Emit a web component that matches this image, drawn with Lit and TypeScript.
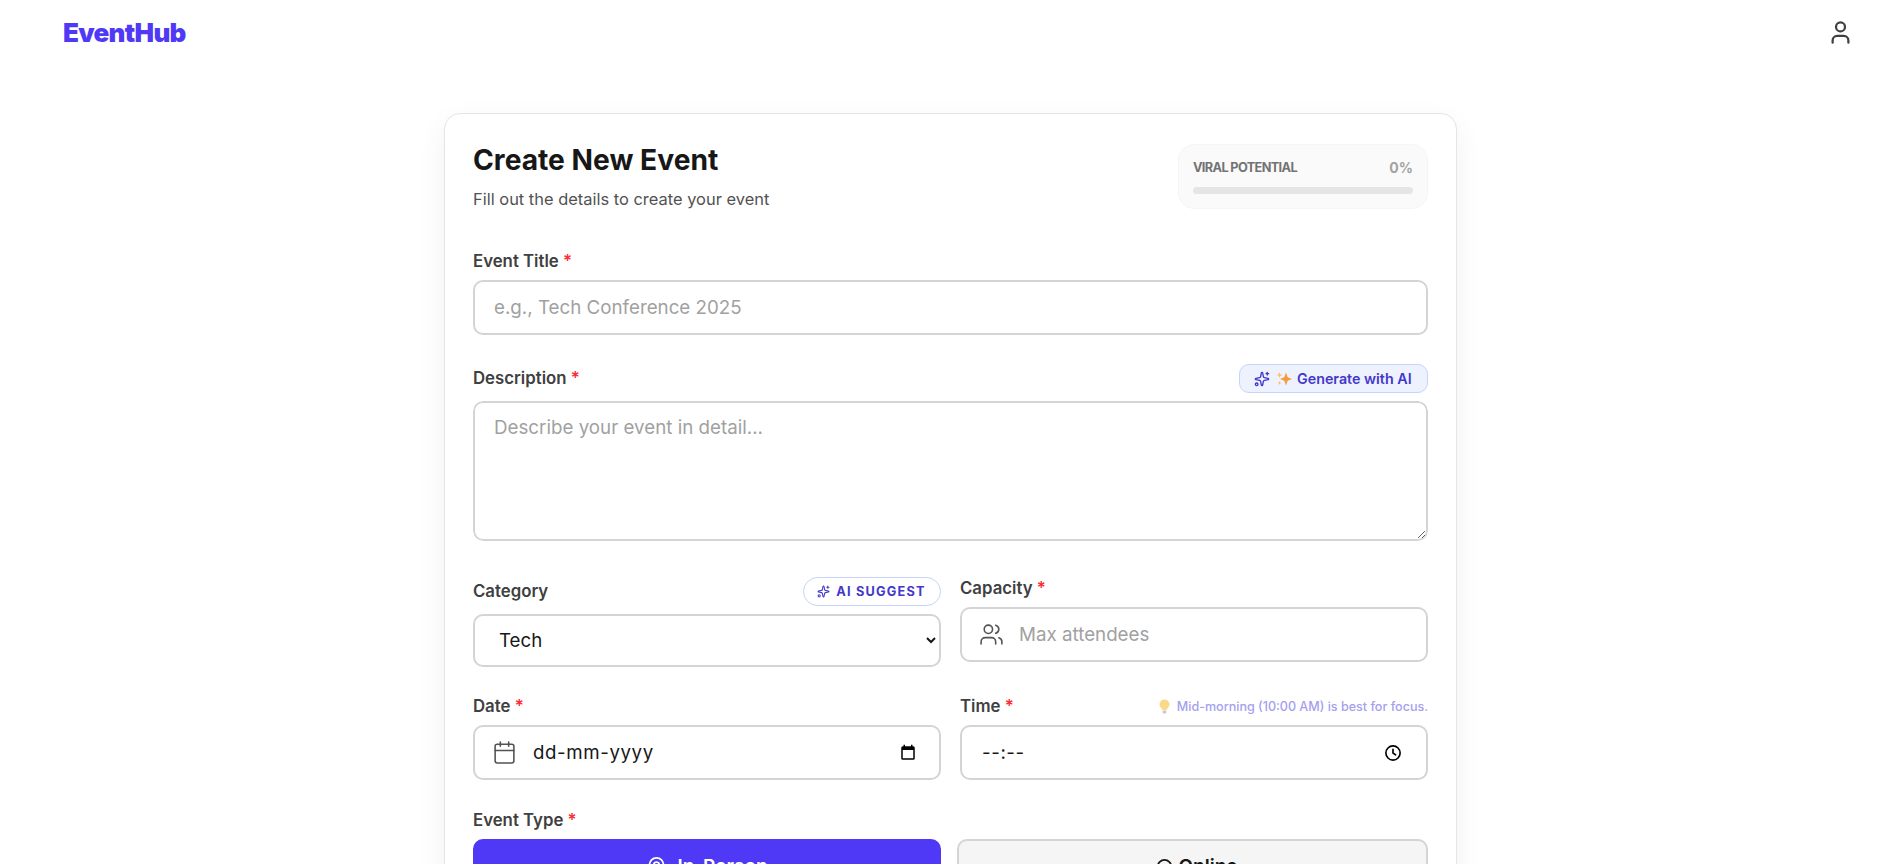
import { LitElement, html, css, svg } from "lit";
import { customElement } from "lit/decorators.js";

const ic = (cls: string, body: unknown) => html`<svg class=${cls} viewBox="0 0 24 24" fill="none" stroke="currentColor" stroke-width="2" stroke-linecap="round" stroke-linejoin="round">${body}</svg>`;

const sparkles = svg`<path d="M11.017 2.814a1 1 0 0 1 1.966 0l1.051 5.558a2 2 0 0 0 1.594 1.594l5.558 1.051a1 1 0 0 1 0 1.966l-5.558 1.051a2 2 0 0 0-1.594 1.594l-1.051 5.558a1 1 0 0 1-1.966 0l-1.051-5.558a2 2 0 0 0-1.594-1.594l-5.558-1.051a1 1 0 0 1 0-1.966l5.558-1.051a2 2 0 0 0 1.594-1.594z"/><path d="M20 2v4"/><path d="M22 4h-4"/><circle cx="4" cy="20" r="2"/>`;
const user = svg`<path d="M19 21v-2a4 4 0 0 0-4-4H9a4 4 0 0 0-4 4v2"/><circle cx="12" cy="7" r="4"/>`;
const users = svg`<path d="M16 21v-2a4 4 0 0 0-4-4H6a4 4 0 0 0-4 4v2"/><circle cx="9" cy="7" r="4"/><path d="M22 21v-2a4 4 0 0 0-3-3.87"/><path d="M16 3.13a4 4 0 0 1 0 7.75"/>`;
const calendar = svg`<path d="M8 2v4"/><path d="M16 2v4"/><rect x="3" y="4" width="18" height="18" rx="2"/><path d="M3 10h18"/>`;
const pin = svg`<path d="M20 10c0 4.993-5.539 10.193-7.399 11.799a1 1 0 0 1-1.202 0C9.539 20.193 4 14.993 4 10a8 8 0 0 1 16 0"/><circle cx="12" cy="10" r="3"/>`;

@customElement("app-root")
export class AppRoot extends LitElement {
  static styles = css`
    :host { display: block; height: 864px; overflow: hidden; background: #fff; color: #262626;
      font-family: Inter, "Liberation Sans", sans-serif; }
    * { box-sizing: border-box; }
    .nav { height: 64px; display: flex; align-items: center; justify-content: space-between; padding: 0 43px 0 63px; }
    .logo { font-family: Inter, sans-serif; font-weight: 900; font-size: 26px; letter-spacing: -0.7px; color: #4f39f6; }
    .ic-user { width: 27px; height: 27px; color: #404040; display: block; }
    .main { padding: 49px 0 0 444px; }
    .card { width: 1013px; height: 900px; border: 1px solid #e5e5e5; border-radius: 16px; padding: 28px;
      background: #fff; box-shadow: 0 10px 30px rgba(0,0,0,.06); }
    .head { display: flex; justify-content: space-between; align-items: flex-start; margin-bottom: 38px; }
    h1 { margin: 0 0 9px; font-size: 28.2px; line-height: 36px; font-weight: 700; color: #171717; }
    .sub { margin: 0; font-size: 16.45px; line-height: 24px; color: #525252; }
    .viral { width: 250px; height: 65px; margin-top: 2px; padding: 12px 14px; border-radius: 16px; background: #fafafa; border: 1px solid #f5f5f5; }
    .viral-top { display: flex; justify-content: space-between; align-items: center; height: 20px; margin-bottom: 10px; }
    .viral-lab { font-size: 12.75px; font-weight: 700; color: #737373; letter-spacing: -0.65px; }
    .viral-val { font-size: 14px; font-weight: 700; color: #a3a3a3; }
    .track { height: 7px; border-radius: 4px; background: #e5e5e5; }
    .lab { font-size: 16.8px; line-height: 25px; font-weight: 600; color: #404040; display: block; }
    .lab i { font-style: normal; color: #fb2c36; }
    .field-title { margin-bottom: 29px; }
    .field-desc { margin-bottom: 35px; }
    .lab-row { display: flex; justify-content: space-between; align-items: center; height: 29px; }
    .box { display: flex; align-items: center; width: 100%; border: 2px solid #d4d4d4; border-radius: 10px; background: #fff;
      padding: 0 19px; font: 18.75px Inter, sans-serif; color: #171717; }
    .box input, .box textarea { border: 0; outline: 0; padding: 0; flex: 1; min-width: 0; font: inherit; color: inherit; background: transparent; }
    .box input::placeholder, .box textarea::placeholder { color: #a1a1a1; opacity: 1; }
    .single { height: 55px; margin-top: 6px; }
    .with-icon { padding-left: 17px; }
    .ta { margin-top: 8px; height: 140px; padding: 0; overflow: hidden; border: 0; }
    .ta textarea { display: block; width: 100%; height: 100%; border: 2px solid #d4d4d4; border-radius: 10px; padding: 11px 19px; line-height: 28px; resize: vertical; }
    .gen { display: flex; align-items: center; gap: 6px; height: 29px; width: 189px; padding: 0 14px; border: 1px solid #c7d2fe; border-radius: 10px;
      background: #eef2ff; color: #4338ca; font: 600 14.3px Inter, sans-serif; white-space: nowrap; }
    .gen-text { margin-left: -1px; }
    .s16 { width: 16px; height: 16px; flex: none; }
    .s12 { width: 13px; height: 13px; flex: none; }
    .bulb { width: 15px; height: 15px; flex: none; }
    .grid { display: grid; grid-template-columns: 467.5px 468px; column-gap: 19.5px; }
    .col-cat { padding-top: 1px; }
    .pill { display: flex; align-items: center; justify-content: center; gap: 6px; width: 138px; height: 29px; border: 1px solid #c7d2fe; border-radius: 15px; background: #fff;
      color: #4338ca; font: 700 12.75px Inter, sans-serif; letter-spacing: 1.2px; }
    select { display: block; width: 100%; height: 53px; margin-top: 8px; padding: 0 20px; border: 2px solid #d4d4d4; border-radius: 10px; background: #fff;
      font: 18.7px Inter, sans-serif; color: #171717; outline: 0; }
    .ic-field { width: 25px; height: 25px; flex: none; color: #525252; margin-right: 15px; stroke-width: 1.5; }
    .dt { font-size: 18.7px; letter-spacing: 0.6px; flex: 1; padding-left: 1px; }
    .native { width: 18px; height: 18px; flex: none; color: #000; }
    .cal { margin-right: 3px; }
    .clock { margin-right: 5px; }
    .row2 { margin-top: 27px; }
    .lab-tip { display: flex; justify-content: space-between; align-items: center; }
    .tip { display: flex; align-items: center; gap: 5px; font-size: 12.55px; font-weight: 500; color: #a5a0ee; }
    .et { margin-top: 28px; }
    .types { display: grid; grid-template-columns: 468px 471px; column-gap: 16px; margin-top: 6px; }
    .type { height: 55px; border-radius: 10px; display: flex; align-items: center; justify-content: center; gap: 10px; font: 600 19px Inter, sans-serif; }
    .on { background: #4f39f6; color: #fff; border: 2px solid #4f39f6; }
    .off { background: #f5f5f5; color: #171717; border: 2px solid #d4d4d4; gap: 4px; }
    .ic-type { width: 21px; height: 21px; }
    .ic-online { width: 27px; height: 21px; flex: none; }
  `;

  render() {
    return html`
      <div class="nav">
        <div class="logo">EventHub</div>
        ${ic("ic-user", user)}
      </div>
      <div class="main">
        <div class="card">
          <div class="head">
            <div>
              <h1>Create New Event</h1>
              <p class="sub">Fill out the details to create your event</p>
            </div>
            <div class="viral">
              <div class="viral-top"><span class="viral-lab">VIRAL POTENTIAL</span><span class="viral-val">0%</span></div>
              <div class="track"></div>
            </div>
          </div>

          <div class="field-title">
            <label class="lab">Event Title <i>*</i></label>
            <div class="box single"><input placeholder="e.g., Tech Conference 2025" /></div>
          </div>

          <div class="field-desc">
            <div class="lab-row">
              <label class="lab">Description <i>*</i></label>
              <div class="gen">
                ${ic("s16", sparkles)}
                <svg class="s16" viewBox="0 0 16 16"><path fill="#f79a3a" d="M10 1.500l1.700 4.800L16 8l-4.300 1.700L10 14.500 8.300 9.700 4 8l4.300-1.700z"/><path fill="#fbc15e" d="M3.500 1l.8 2.200 2.200.8-2.200.8L3.500 7l-.8-2.200L.5 4l2.200-.8zM3.500 10l.6 1.400 1.400.6-1.400.6-.6 1.400-.6-1.400L1.500 12l1.400-.6z"/></svg>
                <span class="gen-text">Generate with AI</span>
              </div>
            </div>
            <div class="box ta"><textarea placeholder="Describe your event in detail..."></textarea></div>
          </div>

          <div class="grid">
            <div class="col-cat">
              <div class="lab-row">
                <label class="lab">Category</label>
                <div class="pill">${ic("s12", sparkles)}<span>AI SUGGEST</span></div>
              </div>
              <select><option>Tech</option></select>
            </div>
            <div>
              <label class="lab">Capacity <i>*</i></label>
              <div class="box single with-icon">
                ${ic("ic-field", users)}
                <input placeholder="Max attendees" />
              </div>
            </div>
          </div>

          <div class="grid row2">
            <div>
              <label class="lab">Date <i>*</i></label>
              <div class="box single with-icon">
                ${ic("ic-field", calendar)}
                <span class="dt">dd-mm-yyyy</span>
                <svg class="native cal" viewBox="0 0 24 24" fill="currentColor"><path d="M19 3h-1V1h-2v2H8V1H6v2H5a2 2 0 0 0-2 2v14a2 2 0 0 0 2 2h14a2 2 0 0 0 2-2V5a2 2 0 0 0-2-2zm0 16H5V8h14z"/></svg>
              </div>
            </div>
            <div>
              <div class="lab-tip">
                <label class="lab">Time <i>*</i></label>
                <span class="tip">
                  <svg class="bulb" viewBox="0 0 16 16"><path fill="#fcd88a" d="M8 .5a5.300 5.300 0 0 0-3.200 9.500c.7.6 1 1.300 1 2.200h4.400c0-.9.300-1.600 1-2.200A5.300 5.300 0 0 0 8 .5z"/><rect x="6" y="12.500" width="4" height="3" rx="1" fill="#c9c9d2"/></svg>
                  <span>Mid-morning (10:00 AM) is best for focus.</span>
                </span>
              </div>
              <div class="box single">
                <span class="dt">--:--</span>
                <svg class="native clock" viewBox="0 0 24 24" fill="none" stroke="currentColor" stroke-width="2.200" stroke-linecap="round"><circle cx="12" cy="12" r="9.500"/><path d="M12 7v5l3.500 2.500"/></svg>
              </div>
            </div>
          </div>

          <div class="et">
            <label class="lab">Event Type <i>*</i></label>
            <div class="types">
              <div class="type on">${ic("ic-type", pin)}<span>In-Person</span></div>
              <div class="type off">
                <svg class="ic-online" viewBox="0 0 27 21" fill="none" stroke="currentColor" stroke-width="1.800"><circle cx="17.500" cy="10.500" r="6.700"/></svg>
                <span>Online</span>
              </div>
            </div>
          </div>
        </div>
      </div>
    `;
  }
}
